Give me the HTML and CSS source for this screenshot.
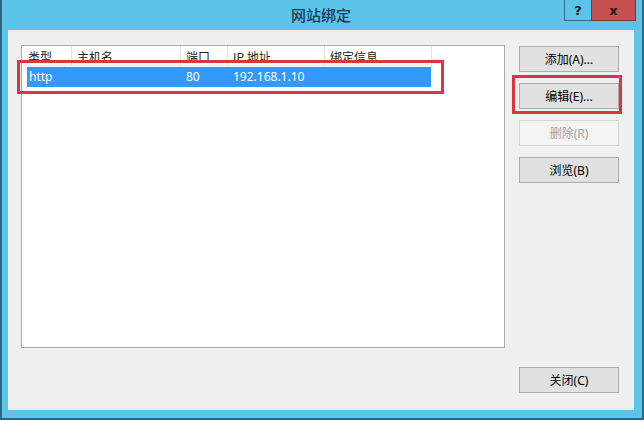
FILE: index.html
```html
<!DOCTYPE html>
<html lang="zh-CN">
<head>
    <meta charset="UTF-8">
    <title>网站绑定</title>
    <link rel="stylesheet" href="styles.css">
</head>
<body>
    <div class="window">
        <div class="titlebar">
            <span class="title">网站绑定</span>
            <div class="caption-btns">
                <span class="cap-help">?</span>
                <span class="cap-close">x</span>
            </div>
        </div>

        <div class="client">
            <div class="listbox">
                <div class="list-header">
                    <span>类型</span>
                    <span>主机名</span>
                    <span>端口</span>
                    <span>IP 地址</span>
                    <span>绑定信息</span>
                </div>
                <div class="list-row selected marked">
                    <span>http</span>
                    <span></span>
                    <span>80</span>
                    <span>192.168.1.10</span>
                    <span></span>
                </div>
            </div>

            <div class="side">
                <div class="btn-group">
                    <button>添加(A)...</button>
                    <button class="marked">编辑(E)...</button>
                    <button disabled>删除(R)</button>
                    <button>浏览(B)</button>
                </div>
                <button>关闭(C)</button>
            </div>
        </div>
    </div>
</body>
</html>
```

FILE: styles.css
```css
body {
    margin: 0;
    background-color: #ffffff;
    font-family: "Noto Sans", "Noto Sans CJK SC", sans-serif;
    font-size: 12px;
    color: #000;
}
.window {
    width: 644px;
    height: 420px;
    box-sizing: border-box;
    background-color: #5cc3e9;
    border-left: 2px solid #2c6580;
    border-right: 2px solid #2c6580;
    border-bottom: 2px solid #2c6580;
    padding: 0 8px 8px 6px;
    display: flex;
    flex-direction: column;
}
.titlebar {
    position: relative;
    height: 30px;
    display: flex;
    align-items: center;
    justify-content: center;
}
.title {
    font-family: "Noto Sans CJK SC", sans-serif;
    font-size: 15px;
    font-weight: 500;
    color: #1d3b58;
    margin-top: -2px;
}
.caption-btns {
    position: absolute;
    top: 0;
    right: -2px;
    display: flex;
}
.cap-help,
.cap-close {
    height: 21px;
    box-sizing: border-box;
    display: flex;
    align-items: center;
    justify-content: center;
    font-family: "DejaVu Sans", sans-serif;
    font-weight: bold;
    font-size: 13px;
    color: #1a1a1a;
}
.cap-help {
    width: 27px;
    border: 1px solid #2f6f8e;
    border-top: none;
    border-right: none;
}
.cap-close {
    width: 45px;
    background-color: #c75050;
    border: 1px solid #7e3a3a;
    border-top: none;
}
.client {
    flex-grow: 1;
    background-color: #f0f0f0;
    display: flex;
    gap: 14px;
    padding: 15px 15px 17px 13px;
}
.listbox {
    width: 484px;
    height: 303px;
    box-sizing: border-box;
    background-color: #ffffff;
    border: 1px solid #a9a9a9;
}
.list-header {
    display: grid;
    grid-template-columns: 50px 109px 47px 97px 107px;
    height: 20px;
    box-sizing: border-box;
    border-bottom: 1px solid #ececec;
    width: 410px;
}
.list-header span {
    font-family: "Noto Sans CJK SC", sans-serif;
    border-right: 1px solid #e3e3e3;
    padding: 2px 0 0 5px;
    line-height: 18px;
    color: #222;
}
.list-header span:first-child {
    padding-left: 6px;
}
.list-row {
    position: relative;
    display: grid;
    grid-template-columns: 45px 109px 47px 97px 106px;
    width: 404px;
    height: 20px;
    margin: 1px 0 0 5px;
    line-height: 20px;
}
.list-row span {
    padding-left: 5px;
}
.list-row span:first-child {
    padding-left: 2px;
}
.selected {
    background-color: #3399ff;
    color: #ffffff;
}
.marked::after {
    content: "";
    position: absolute;
    border: 3px solid #d9363e;
    pointer-events: none;
}
.list-row.marked::after {
    left: -10px;
    right: -13px;
    top: -7px;
    bottom: -7px;
}
.side {
    width: 100px;
    display: flex;
    flex-direction: column;
    justify-content: space-between;
    padding-top: 1px;
}
.btn-group {
    display: flex;
    flex-direction: column;
    gap: 11px;
}
button {
    position: relative;
    width: 100px;
    height: 26px;
    padding: 0;
    font-family: "Noto Sans", "Noto Sans CJK SC", sans-serif;
    font-size: 12px;
    color: #000;
    background-color: #e1e1e1;
    border: 1px solid #adadad;
    border-radius: 0;
}
button:disabled {
    background-color: #f4f4f4;
    border-color: #d5d5d5;
    color: #a3a3a3;
}
button.marked::after {
    left: -8px;
    right: -4px;
    top: -9px;
    bottom: -6px;
}
```
